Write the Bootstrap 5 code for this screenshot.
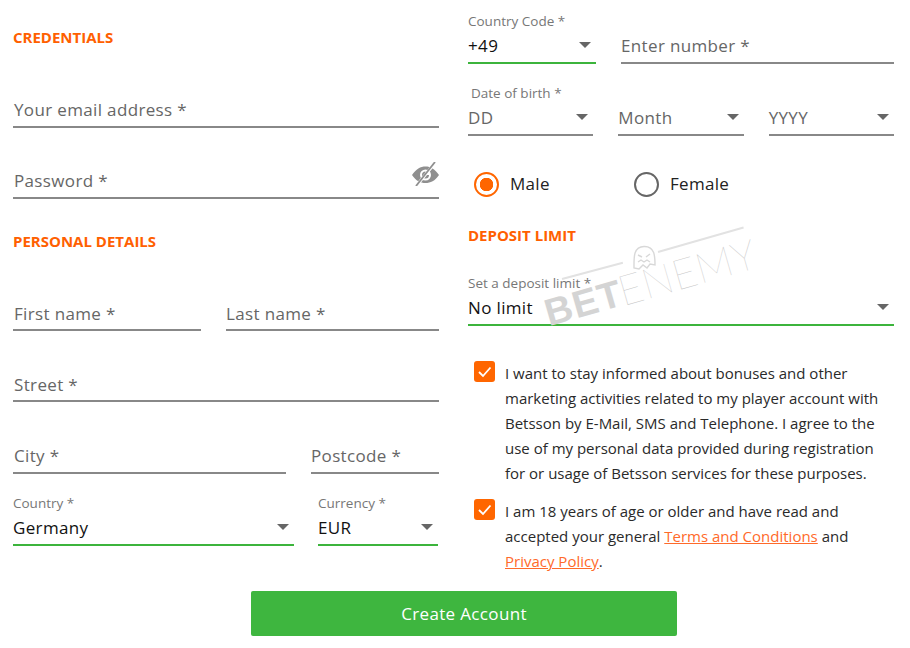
<!DOCTYPE html>
<html lang="en">
<head>
<meta charset="utf-8">
<title>Create Account</title>
<link rel="stylesheet" href="https://cdn.jsdelivr.net/npm/bootstrap@5.3.0/dist/css/bootstrap.min.css">
<style>
html,body{background:#fff;height:648px;overflow:hidden}
body{font-family:"Open Sans","Liberation Sans",sans-serif;color:#222;position:relative}
.sheet{width:910px;height:648px}
.pane{width:426px}
.pane-left{margin-left:13px;padding-top:27px}
.pane-right{margin-left:29px;padding-top:12px}
.sect{color:#ff6000;font-size:15px;font-weight:700;line-height:20px;margin:0}
.fld{height:30px;border-bottom:2px solid #888;color:#666;font-size:17px;line-height:24px;padding:0 0 4px 1px;position:relative;display:flex;align-items:flex-end;letter-spacing:.35px}
.fld.low{padding-bottom:3px}
.fld.flush{padding-left:0}
.sel{height:52px;display:flex;flex-direction:column;justify-content:flex-end;border-bottom:2px solid #3cb43c;position:relative;padding-bottom:4px}
.sel.idle{height:30px;border-bottom-color:#888}
.cap{color:#777;font-size:13.5px;line-height:18px;margin-bottom:4px}
.val{color:#111;font-size:17px;line-height:24px;letter-spacing:.35px}
.val.dim{color:#666}
.arrow{position:absolute;right:5px;bottom:14px;width:0;height:0;border-left:6px solid transparent;border-right:6px solid transparent;border-top:6px solid #666}
.m51{margin-top:51px}.m50{margin-top:50px}.m41{margin-top:41px}.m42{margin-top:42px}.m32{margin-top:32px}.m20{margin-top:20px}
.w188{width:188px}.w275{width:273px}.w281{width:281px}.w128{width:128px}.w120{width:120px}
.gap25{gap:25px}
.gap24{gap:24px}
.eye{position:absolute;right:0;bottom:11px;width:27px;height:24px}
.dob-cap{color:#777;font-size:13.5px;line-height:18px;margin:20px 0 4px 3px}
.dob{width:125px}
.radios{margin:35px 0 0 6px;height:26px;align-items:center}
.radio-pick{display:flex;align-items:center;gap:11px;font-size:17px;letter-spacing:.3px;color:#222;width:160px}
.form-check-input.dot{width:25px;height:25px;margin:0;border:2.5px solid #666;background:#fff;flex:none}
.form-check-input.dot:checked{border-color:#ff6600;background:radial-gradient(circle,#ff6600 0 6.5px,#fff 7px)}
.dep-head{margin-top:28px}
.dep{margin-top:29px}
.agree{display:flex;gap:10px;margin-left:6px;font-size:15px;line-height:25px;color:#2a2a2a}
.form-check-input.tick{width:21px;height:21px;margin:0;border:0;border-radius:3px;background-color:#ff6600;flex:none;opacity:1;background-size:21px 21px;background-image:url("data:image/svg+xml,%3csvg xmlns='http://www.w3.org/2000/svg' viewBox='0 0 21 21'%3e%3cpath fill='none' stroke='%23fff' stroke-width='1.800' d='M5 11l4 4l7.500-8.500'/%3e%3c/svg%3e")}
.agree-a{margin-top:35px}
.agree-b{margin-top:13px}
.agree a{color:#ff6a2a}
.btn.make{position:absolute;left:251px;top:591px;width:426px;height:45px;background:#3eb63f;border:0;border-radius:2px;color:#fff;font-size:17px;letter-spacing:.35px;line-height:45px;padding:0}
.mark-wm{position:absolute;left:540px;top:222px;width:220px;height:112px;pointer-events:none}
.wm-line{position:absolute;height:2px;background:#e2e2e2;transform-origin:left center}
.wm-t{position:absolute;white-space:nowrap;transform:rotate(-16deg);transform-origin:left bottom;color:#d4d4d4}
.wm-b{left:11px;top:71px;font:700 38px/40px "Liberation Sans",sans-serif;letter-spacing:1px}
.wm-e{left:85px;top:45px;font:100 42px/46px Lato,sans-serif;color:#c8c8c8}
.wm-g{position:absolute;left:91px;top:23px;width:26px;height:25px}
</style>
</head>
<body>
<div class="sheet d-flex">
  <div class="pane pane-left">
    <h2 class="sect">CREDENTIALS</h2>
    <div class="fld m51">Your email address *</div>
    <div class="fld m41">Password *
      <svg class="eye" viewBox="0 0 27 24" aria-hidden="true">
        <path fill="#8f8f8f" fill-rule="evenodd" d="M0 13C4 7 8.500 4.500 13.500 4.500S23 7 27 13c-4 6-8.500 8-13.500 8S4 19 0 13zM13.500 7.500a5.500 5.500 0 1 0 0 11a5.500 5.500 0 0 0 0-11z"/>
        <path fill="#8f8f8f" d="M13.500 9.500a3.500 3.500 0 1 0 3.500 3.500l-3.500 0z"/>
        <path stroke="#fff" stroke-width="2.800" d="M5 23L23 1"/>
        <path stroke="#8f8f8f" stroke-width="1.800" d="M4 24L23 0"/>
      </svg>
    </div>
    <h2 class="sect m32">PERSONAL DETAILS</h2>
    <div class="d-flex gap25 m50">
      <div class="fld low w188">First name *</div>
      <div class="fld low flush flex-fill">Last name *</div>
    </div>
    <div class="fld low m41">Street *</div>
    <div class="d-flex gap25 m42">
      <div class="fld w275">City *</div>
      <div class="fld flush flex-fill">Postcode *</div>
    </div>
    <div class="d-flex gap24 m20">
      <div class="sel w281"><span class="cap">Country *</span><span class="val">Germany</span><i class="arrow"></i></div>
      <div class="sel w120"><span class="cap">Currency *</span><span class="val">EUR</span><i class="arrow"></i></div>
    </div>
  </div>
  <div class="pane pane-right">
    <div class="d-flex gap25">
      <div class="sel w128"><span class="cap">Country Code *</span><span class="val">+49</span><i class="arrow"></i></div>
      <div class="fld flush flex-fill align-self-end">Enter number *</div>
    </div>
    <div class="dob-cap">Date of birth *</div>
    <div class="d-flex gap25">
      <div class="sel idle dob flex-fill"><span class="val dim">DD</span><i class="arrow"></i></div>
      <div class="sel idle dob flex-fill"><span class="val dim">Month</span><i class="arrow"></i></div>
      <div class="sel idle dob flex-fill"><span class="val dim">YYYY</span><i class="arrow"></i></div>
    </div>
    <div class="radios d-flex">
      <label class="radio-pick"><input class="form-check-input dot" type="radio" name="sex" checked>Male</label>
      <label class="radio-pick"><input class="form-check-input dot" type="radio" name="sex">Female</label>
    </div>
    <h2 class="sect dep-head">DEPOSIT LIMIT</h2>
    <div class="sel dep"><span class="cap">Set a deposit limit *</span><span class="val">No limit</span><i class="arrow"></i></div>
    <label class="agree agree-a"><input class="form-check-input tick" type="checkbox" checked><span>I want to stay informed about bonuses and other marketing activities related to my player account with Betsson by E-Mail, SMS and Telephone. I agree to the use of my personal data provided during registration for or usage of Betsson services for these purposes.</span></label>
    <label class="agree agree-b"><input class="form-check-input tick" type="checkbox" checked><span>I am 18 years of age or older and have read and accepted your general <a href="#">Terms and Conditions</a> and <a href="#">Privacy Policy</a>.</span></label>
  </div>
</div>
<button class="btn make" type="button">Create Account</button>
<div class="mark-wm">
  <i class="wm-line" style="left:22px;top:56px;width:63px;transform:rotate(-15deg)"></i>
  <i class="wm-line" style="left:118px;top:29px;width:89px;transform:rotate(-16deg)"></i>
  <svg class="wm-g" viewBox="0 0 26 25" aria-hidden="true" fill="none" stroke="#d8d8d8" stroke-width="1.400">
    <path d="M3 23C3 13 2 2 13 1.500C24 1 24 12 24 20L19 19L16 23L12 20L8 24z"/>
    <path d="M7 10l4 2M19 9l-4 3M7 17l3-2l3 2l3-2l3 2"/>
  </svg>
  <span class="wm-t wm-b">BET</span>
  <span class="wm-t wm-e">ENEMY</span>
</div>
</body>
</html>
